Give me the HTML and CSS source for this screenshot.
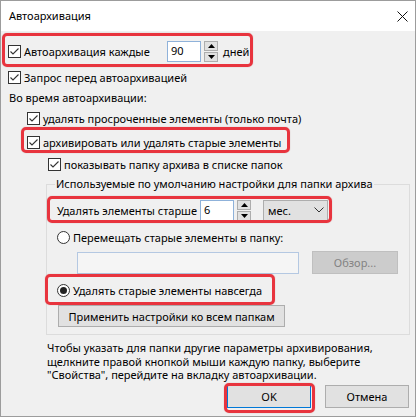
FILE: index.html
```html
<!DOCTYPE html>
<html lang="ru">
<head>
<meta charset="utf-8">
<title>Автоархивация</title>
<link rel="stylesheet" href="styles.css">
</head>
<body>
<div class="window">
  <div class="titlebar">
    <span class="title">Автоархивация</span>
    <svg class="close" width="11" height="11" viewBox="0 0 11 11"><path d="M0.5 0.5 L10.5 10.5 M10.5 0.5 L0.5 10.5" stroke="#111" stroke-width="1" fill="none"/></svg>
  </div>
  <div class="content">
    <div class="row r1">
      <span class="hl hl1"></span>
      <svg class="cb" viewBox="0 0 13 13"><rect x="0.5" y="0.5" width="12" height="12" fill="#fff" stroke="#333"/><path d="M2.5 6.5 L5 9 L10.5 3.5" stroke="#333" stroke-width="1.1" fill="none"/></svg>
      <span class="lbl1">Автоархивация каждые</span>
      <span class="num">90</span>
      <span class="spin">
        <span class="sb"><svg width="7" height="4" viewBox="0 0 7 4"><path d="M0 4 L3.5 0 L7 4 Z" fill="#000"/></svg></span>
        <span class="sb"><svg width="7" height="4" viewBox="0 0 7 4"><path d="M0 0 L3.5 4 L7 0 Z" fill="#000"/></svg></span>
      </span>
      <span class="unit">дней</span>
    </div>
    <div class="row r2">
      <svg class="cb" viewBox="0 0 13 13"><rect x="0.5" y="0.5" width="12" height="12" fill="#fff" stroke="#333"/><path d="M2.5 6.5 L5 9 L10.5 3.5" stroke="#333" stroke-width="1.1" fill="none"/></svg>
      <span>Запрос перед автоархивацией</span>
    </div>
    <div class="row r3">Во время автоархивации:</div>
    <div class="row r4">
      <svg class="cb" viewBox="0 0 13 13"><rect x="0.5" y="0.5" width="12" height="12" fill="#fff" stroke="#333"/><path d="M2.5 6.5 L5 9 L10.5 3.5" stroke="#333" stroke-width="1.1" fill="none"/></svg>
      <span>удалять просроченные элементы (только почта)</span>
    </div>
    <div class="row r5">
      <span class="hl hl2"></span>
      <svg class="cb" viewBox="0 0 13 13"><rect x="0.5" y="0.5" width="12" height="12" fill="#fff" stroke="#333"/><path d="M2.5 6.5 L5 9 L10.5 3.5" stroke="#333" stroke-width="1.1" fill="none"/></svg>
      <span>архивировать или удалять старые элементы</span>
    </div>
    <div class="row r6">
      <svg class="cb" viewBox="0 0 13 13"><rect x="0.5" y="0.5" width="12" height="12" fill="#fff" stroke="#333"/><path d="M2.5 6.5 L5 9 L10.5 3.5" stroke="#333" stroke-width="1.1" fill="none"/></svg>
      <span>показывать папку архива в списке папок</span>
    </div>
    <fieldset class="group">
      <legend>Используемые по умолчанию настройки для папки архива</legend>
      <div class="row g1">
        <span class="hl hl3"></span>
        <span class="lbl2">Удалять элементы старше</span>
        <span class="num">6</span>
        <span class="spin">
          <span class="sb"><svg width="7" height="4" viewBox="0 0 7 4"><path d="M0 4 L3.5 0 L7 4 Z" fill="#000"/></svg></span>
          <span class="sb"><svg width="7" height="4" viewBox="0 0 7 4"><path d="M0 0 L3.5 4 L7 0 Z" fill="#000"/></svg></span>
        </span>
        <span class="select"><span>мес.</span><svg width="10" height="6" viewBox="0 0 10 6"><path d="M0.5 0.5 L5 5 L9.5 0.5" stroke="#333" fill="none"/></svg></span>
      </div>
      <div class="row g2">
        <svg class="rb" viewBox="0 0 13 13"><circle cx="6.5" cy="6.5" r="6" fill="#fff" stroke="#333"/></svg>
        <span>Перемещать старые элементы в папку:</span>
      </div>
      <div class="row g3">
        <span class="path"></span>
        <span class="btn disabled browse">Обзор...</span>
      </div>
      <div class="row g4">
        <span class="hl hl4"></span>
        <svg class="rb" viewBox="0 0 13 13"><circle cx="6.5" cy="6.5" r="6" fill="#fff" stroke="#333"/><circle cx="6.5" cy="6.5" r="3.5" fill="#222"/></svg>
        <span>Удалять старые элементы навсегда</span>
      </div>
      <div class="btn apply">Применить настройки ко всем папкам</div>
    </fieldset>
    <p class="note">Чтобы указать для папки другие параметры архивирования, щелкните правой кнопкой мыши каждую папку, выберите "Свойства", перейдите на вкладку автоархивации.</p>
    <div class="actions">
      <span class="btn ok"><span class="hl hl5"></span>OK</span>
      <span class="btn">Отмена</span>
    </div>
  </div>
</div>
</body>
</html>
```

FILE: styles.css
```css
html, body {
  margin: 0;
  padding: 0;
  background: #ffffff;
}
body {
  font-family: "Noto Sans", "Open Sans", sans-serif;
  font-size: 11px;
  color: #000;
}
.window {
  width: 416px;
  height: 417px;
  box-sizing: border-box;
  border: 1px solid #9c9c9c;
  background: #f0f0f0;
  overflow: hidden;
}
.titlebar {
  height: 30px;
  background: #fff;
  display: flex;
  align-items: center;
  justify-content: space-between;
  padding: 0 7px 0 8px;
}
.title {
  font-size: 11px;
  line-height: 16px;
}
.close {
  display: block;
}
.content {
  padding: 0 6px 0 7px;
}
.row {
  display: flex;
  align-items: center;
  position: relative;
  white-space: nowrap;
}
.cb, .rb {
  width: 13px;
  height: 13px;
  flex: none;
  margin-right: 3px;
  display: block;
}
.hl {
  position: absolute;
  box-sizing: border-box;
  border: 3px solid #e8343e;
  border-radius: 5px;
  pointer-events: none;
  box-shadow: 0 0 1px rgba(120, 0, 0, 0.4);
}
.r1 {
  margin-top: 8px;
  height: 24px;
}
.hl1 { left: -6px; top: -6px; width: 251px; height: 34px; }
.lbl1 {
  width: 143px;
  flex: none;
}
.num {
  width: 34px;
  height: 21px;
  box-sizing: border-box;
  border: 1px solid #8fb2da;
  background: #fff;
  padding: 0 3px;
  line-height: 17px;
  flex: none;
}
.spin {
  display: flex;
  flex-direction: column;
  gap: 1px;
  margin-left: 3px;
  flex: none;
}
.sb {
  width: 14px;
  height: 10px;
  box-sizing: border-box;
  border: 1px solid #adadad;
  background: #e1e1e1;
  display: flex;
  align-items: center;
  justify-content: center;
}
.sb svg { display: block; }
.unit {
  margin-left: 5px;
}
.r2 {
  margin-top: 3px;
  height: 22px;
}
.r3 {
  height: 18px;
  padding-left: 1px;
}
.r4 {
  margin-top: 2px;
  height: 20px;
  padding-left: 19px;
}
.r5 {
  margin-top: 4px;
  height: 20px;
  padding-left: 19px;
}
.hl2 { left: 13px; top: -5px; width: 269px; height: 26px; }
.r6 {
  margin-top: 2px;
  height: 20px;
  padding-left: 40px;
}
.group {
  margin: 2px 0 0 38px;
  width: 364px;
  box-sizing: border-box;
  border: 1px solid #dcdcdc;
  padding: 7px 10px 7px 10px;
  min-width: 0;
}
.group legend {
  padding: 0 1px;
  margin-left: -2px;
  line-height: 16px;
}
.g1 {
  height: 22px;
}
.hl3 { left: -10px; top: -3px; width: 285px; height: 27px; }
.lbl2 {
  width: 143px;
  flex: none;
}
.select {
  margin-left: 12px;
  width: 65px;
  height: 21px;
  box-sizing: border-box;
  border: 1px solid #adadad;
  background: #e1e1e1;
  display: flex;
  align-items: center;
  justify-content: space-between;
  padding: 0 3px 0 4px;
}
.select svg { display: block; }
.g2 {
  margin-top: 8px;
  height: 16px;
}
.g3 {
  margin-top: 6px;
  height: 23px;
}
.path {
  margin-left: 20px;
  width: 222px;
  height: 22px;
  box-sizing: border-box;
  border: 1px solid #b4c8e2;
  background: #f5f5f5;
}
.btn {
  display: flex;
  align-items: center;
  justify-content: center;
  box-sizing: border-box;
  border: 1px solid #adadad;
  background: #e1e1e1;
  position: relative;
}
.browse {
  margin-left: 13px;
  width: 86px;
  height: 23px;
}
.disabled {
  background: #cccccc;
  border-color: #bfbfbf;
  color: #838383;
}
.g4 {
  margin-top: 8px;
  height: 16px;
}
.hl4 { left: -12px; top: -8px; width: 230px; height: 31px; }
.apply {
  margin: 7px 0 0 1px;
  width: 227px;
  height: 22px;
}
.note {
  margin: 6px 0 0 39px;
  line-height: 13.5px;
}
.actions {
  display: flex;
  justify-content: flex-end;
  gap: 14px;
  margin-top: 3px;
}
.actions .btn {
  width: 84px;
  height: 23px;
}
.ok {
  border-color: #0078d7;
}
.hl5 { left: -4px; top: -3px; width: 91px; height: 30px; }
```
